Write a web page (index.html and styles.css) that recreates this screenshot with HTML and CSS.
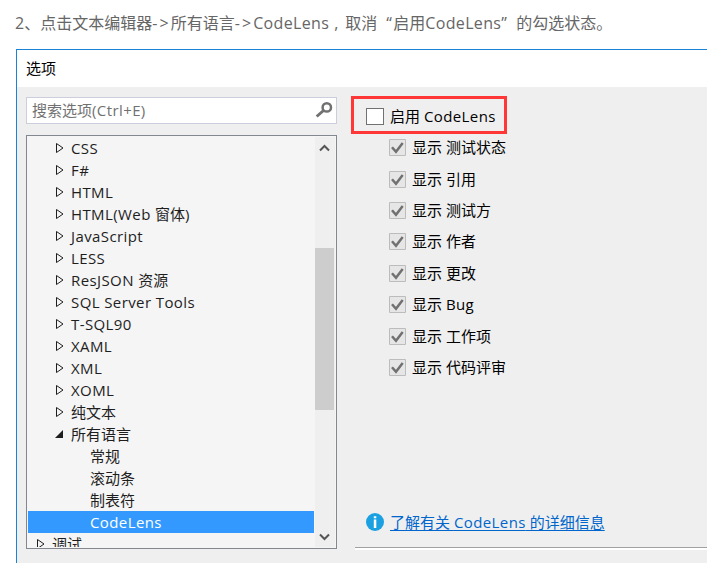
FILE: index.html
```
<!DOCTYPE html>
<html lang="zh-CN">
<head>
<meta charset="utf-8">
<title>选项</title>
<link rel="stylesheet" href="styles.css">
</head>
<body>
<p class="step">2、点击文本编辑器<span class="arrow">-&gt;</span>所有语言<span class="arrow">-&gt;</span><span class="en">CodeLens</span><span class="comma">,</span>取消<span class="quote open">“</span>启用<span class="en">CodeLens</span><span class="quote close">”</span>的勾选状态。</p>
<main class="dialog">
  <header class="title">选项</header>
  <div class="content">
    <section class="left">
      <div class="search"><span>搜索选项<span class="la">(Ctrl+E)</span></span>
        <svg width="18" height="18" viewBox="0 0 18 18"><circle cx="11.8" cy="7.4" r="4.2" fill="none" stroke="#717171" stroke-width="2.5"/><path d="M8.5 10.5 1.7 16.5" stroke="#717171" stroke-width="3"/></svg>
      </div>
      <div class="tree">
        <ul id="rows"></ul>
        <div class="scroll">
          <svg width="11" height="8" viewBox="0 0 11 8"><path d="M1 6.5 5.5 2 10 6.5" fill="none" stroke="#555" stroke-width="2"/></svg>
          <div class="thumb"></div>
          <svg class="down" width="11" height="8" viewBox="0 0 11 8"><path d="M1 1.5 5.5 6 10 1.5" fill="none" stroke="#555" stroke-width="2"/></svg>
        </div>
      </div>
    </section>
    <section class="right">
      <div class="enable"><span class="box"></span><span>启用 <span class="la">CodeLens</span></span></div>
      <ul class="checks" id="checks"></ul>
      <div class="info">
        <svg width="18" height="18" viewBox="0 0 18 18"><circle cx="9" cy="9" r="9" fill="#1ba1e2"/><path d="M7.8 3.3h2.5v2H7.8zM7.8 6.5h2.5V15H7.8z" fill="#fff"/></svg>
        <a>了解有关 <span class="la">CodeLens</span> 的详细信息</a>
      </div>
    </section>
  </div>
</main>
<script src="app.js"></script>
</body>
</html>
```
FILE: styles.css
```
* { box-sizing: border-box; }
body { margin: 0; width: 707px; height: 563px; overflow: hidden; background: #fff; color: #000; font: 15px/22px "Open Sans", "Noto Sans CJK SC", sans-serif; }
ul { list-style: none; margin: 0; padding: 0; }
svg { display: block; flex: none; }
.la { letter-spacing: 0.4px; }
.step { margin: 0; height: 49px; padding: 11px 0 0 15px; font-size: 16px; line-height: 24px; color: #666; white-space: nowrap; }
.arrow { letter-spacing: 2.1px; }
.en { letter-spacing: 0.35px; }
.comma { display: inline-block; width: 16px; padding-left: 5px; }
.quote { display: inline-block; }
.open { width: 16px; padding-left: 9px; }
.close { width: 15px; }
.dialog { margin-left: 16px; height: 514px; border: solid #1883d7; border-width: 1px 0 0 1px; background: #efefef; }
.title { height: 37px; padding: 7px 0 0 9px; background: #fff; }
.content { display: flex; height: 476px; }
.left { width: 311px; margin: 10px 0 0 9px; }
.search { display: flex; justify-content: space-between; height: 27px; padding: 2px 3px 0 5px; border: 1px solid #cccedb; background: #fff; color: #717171; }
.search > span { margin-top: -1px; }
.tree { display: flex; margin-top: 11px; height: 414px; padding: 1px; border: 1px solid #828790; background: #f5f5f5; color: #1e1e1e; }
#rows { flex: none; width: 286px; height: 410px; overflow: hidden; }
#rows li { display: flex; align-items: center; height: 22px; padding-left: 26px; white-space: nowrap; }
#rows li svg { margin-right: 6px; }
#rows .child { padding-left: 62px; }
#rows .selected { background: #3399ff; color: #fff; }
#rows .root { padding-left: 7px; }
.scroll { width: 20px; margin-left: 1px; background: #efefef; display: flex; flex-direction: column; padding: 7px 0 6px; }
.scroll svg { margin-left: 4px; }
.thumb { width: 19px; height: 162px; margin-top: 96px; background: #cdcdcd; }
.scroll .down { margin-top: auto; }
.right { flex: 1; margin-left: 14px; padding-top: 9px; display: flex; flex-direction: column; }
.enable { width: 156px; height: 38px; border: 3px solid #ff3737; padding: 2px 0 0 12px; display: flex; align-items: center; white-space: nowrap; }
.box { width: 18px; height: 17px; border: 1px solid #717171; background: #fff; margin-right: 6px; }
.checks { padding: 0 0 0 38px; margin-top: -2px; }
.checks li { display: flex; align-items: center; height: 31.4px; white-space: nowrap; }
.checks li > span { margin-top: -1px; }
.checks svg { margin-right: 6px; }
.info { display: flex; align-items: center; height: 22px; margin: 128px 0 0 15px; color: #0066cc; white-space: nowrap; }
.info svg { margin-right: 6px; }
.info a { text-decoration: underline; text-underline-offset: 2px; text-decoration-thickness: 1px; }
.right::after { content: ""; height: 2px; margin: 14px 0 0 4px; border-top: 1px solid #a0a0a0; background: #fff; }
```
FILE: app.js
```
const closed = '<svg width="11" height="12" viewBox="0 0 11 12"><path d="M2.5 1.5v9L9 6z" fill="none" stroke="#1e1e1e"/></svg>';
const open = '<svg width="11" height="12" viewBox="0 0 11 12"><path d="M9 2v8H1z" fill="#1e1e1e"/></svg>';
const rows = [["CSS"],["F#"],["HTML"],["HTML(Web 窗体)"],["JavaScript"],["LESS"],["ResJSON 资源"],["SQL Server Tools"],["T-SQL90"],["XAML"],["XML"],["XOML"],["纯文本"],["所有语言","open"],["常规","child"],["滚动条","child"],["制表符","child"],["CodeLens","child selected"],["调试","root"]];
const latin = t => t.replace(/[A-Za-z(][A-Za-z0-9#() -]*/g, '<span class="la">$&</span>');
document.getElementById("rows").innerHTML = rows.map(([t, k = ""]) => `<li class="${k}">${k.startsWith("child") ? "" : k === "open" ? open : closed}<span>${latin(t)}</span></li>`).join("");
document.getElementById("checks").innerHTML = ["测试状态","引用","测试方","作者","更改","Bug","工作项","代码评审"].map(t => `<li><svg width="17" height="17" viewBox="0 0 17 17"><path d="M.5.5h16v16H.5z" fill="#e6e6e6" stroke="#bcbcbc"/><path d="m3 8.2 4 4.6L13.7 4" fill="none" stroke="#717171" stroke-width="2.5"/></svg><span>显示 ${latin(t)}</span></li>`).join("");
```
